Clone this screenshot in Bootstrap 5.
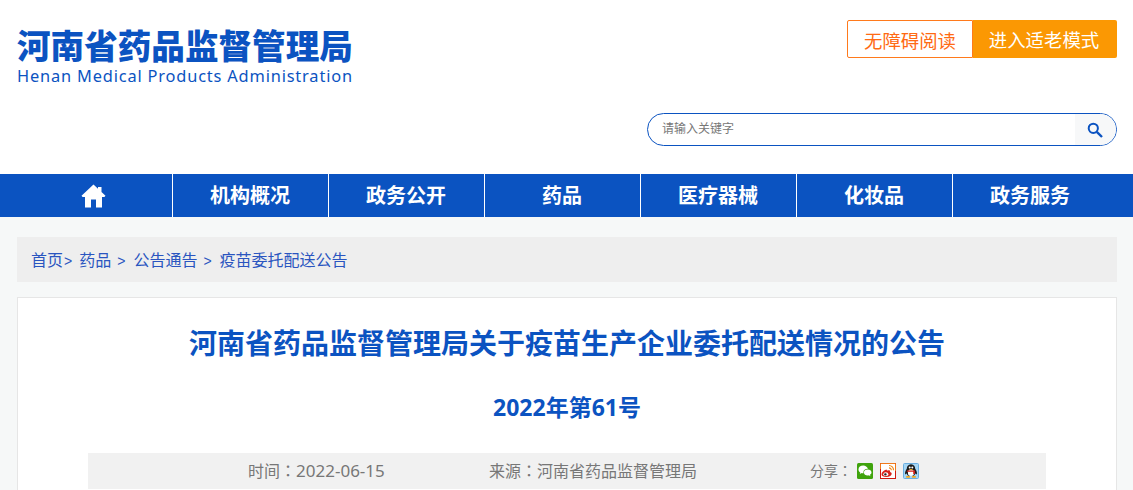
<!DOCTYPE html>
<html lang="zh-CN">

<head>
  <meta charset="UTF-8">
  <meta name="viewport" content="width=device-width, initial-scale=1.0">
  <title>河南省药品监督管理局</title>
  <link href="https://cdn.jsdelivr.net/npm/bootstrap@5.3.3/dist/css/bootstrap.min.css" rel="stylesheet">
  <script src="https://cdn.jsdelivr.net/npm/bootstrap@5.3.3/dist/js/bootstrap.bundle.min.js"></script>
  <style>
    body { background: #f6f8f8; font-family: "Liberation Sans", "Noto Sans CJK SC", sans-serif; overflow: hidden; }
    .wrap { width: 1100px; margin-left: 17px; }
    .site-head { background: #fff; height: 174px; }
    .logo-box { padding-top: 29px; color: #0b53c1; }
    .logo-cn { font-size: 33.6px; line-height: 38px; font-weight: 900; white-space: nowrap; }
    .logo-en { font-family: "Noto Sans", sans-serif; font-size: 16.4px; line-height: 17px; letter-spacing: .82px; white-space: nowrap; }
    .head-right { padding-top: 20px; width: 470px; }
    .mode-a, .mode-b { height: 38px; font-size: 18.4px; text-align: center; white-space: nowrap; }
    .mode-a { width: 126px; color: #ff6a13; border: 1px solid #ff7a1c; border-radius: 2px 0 0 2px; line-height: 41px; }
    .mode-b { width: 144px; padding-right: 2px; color: #fff; background: #fb9803; border-radius: 0 2px 2px 0; line-height: 42px; }
    .search-box { margin-top: 55px; height: 33px; border: 1px solid #0b53c1; border-radius: 17px; overflow: hidden; }
    .search-txt { padding-left: 14px; font-size: 12px; line-height: 31px; color: #777; }
    .search-btn { width: 41px; padding-right: 2px; background: #f7f8f9; }
    .main-nav { background: #0b53c1; height: 43px; }
    .nav-cell { width: 156px; height: 43px; padding-right: 1px; line-height: 45px; text-align: center; color: #fff; font-size: 20px; font-weight: 700; border-left: 1px solid #fff; }
    .nav-cell:first-child { width: 155px; padding-right: 2px; border-left: 0; }
    .crumb-bar { margin-top: 20px; height: 45px; background: #eee; padding-left: 14px; font-size: 16px; line-height: 47px; color: #2a55c0; white-space: nowrap; }
    .crumb-sep { font-size: 14px; }
    .crumb-sep-first { margin: 0 7px 0 1px; }
    .crumb-sep-mid { margin: 0 8px 0 6px; }
    .art-box { margin-top: 15px; height: 300px; background: #fff; border: 1px solid #e6e6e6; padding: 0 70px; }
    .art-title { margin: 0; padding-top: 28px; font-size: 28px; line-height: 38px; font-weight: 700; color: #0b53c1; text-align: center; }
    .art-no { margin: 0; padding-top: 24px; font-family: "Noto Sans", "Noto Sans CJK SC", sans-serif; font-size: 23px; line-height: 38px; font-weight: 700; color: #0b53c1; text-align: center; }
    .art-meta { margin-top: 27px; height: 36px; background: #f1f1f1; color: #777; font-size: 16px; line-height: 35px; }
    .meta-time { margin-left: 160px; width: 241px; }
    .meta-date { font-family: "Noto Sans", sans-serif; font-size: 17px; }
    .meta-colon { font-family: "Noto Sans CJK TC", sans-serif; }
    .meta-src { width: 321px; }
    .meta-share { font-size: 14px; }
    .share-label { width: 40px; margin-right: 7px; white-space: nowrap; }
    .share-icon { width: 16px; height: 16px; margin-right: 7px; }
  </style>
</head>

<body>
  <div class="site-head">
    <div class="wrap d-flex justify-content-between">
      <div class="logo-box">
        <div class="logo-cn">河南省药品监督管理局</div>
        <div class="logo-en">Henan Medical Products Administration</div>
      </div>
      <div class="head-right">
        <div class="d-flex justify-content-end">
          <div class="mode-a">无障碍阅读</div>
          <div class="mode-b">进入适老模式</div>
        </div>
        <div class="search-box d-flex justify-content-between">
          <div class="search-txt">请输入关键字</div>
          <div class="search-btn d-flex align-items-center justify-content-center">
            <svg width="16" height="16" viewBox="0 0 16 16" fill="none" stroke="#0b53c1">
              <circle cx="6.3" cy="6.3" r="4.6" stroke-width="2"/>
              <path d="M9.8 9.8 15 15" stroke-width="2.4"/>
            </svg>
          </div>
        </div>
      </div>
    </div>
  </div>

  <div class="main-nav">
    <div class="wrap d-flex">
      <div class="nav-cell d-flex align-items-center justify-content-center">
        <svg width="25" height="24" viewBox="0 0 25 24" fill="#fff">
          <path d="M12.5 .5 .5 11.8 1.600 13H4V23.500H10V15.500H15V23.500H21V13H23.400L24.500 11.800 20.500 8V3H17V4.800Z"/>
        </svg>
      </div>
      <div class="nav-cell">机构概况</div>
      <div class="nav-cell">政务公开</div>
      <div class="nav-cell">药品</div>
      <div class="nav-cell">医疗器械</div>
      <div class="nav-cell">化妆品</div>
      <div class="nav-cell">政务服务</div>
    </div>
  </div>

  <div class="wrap">
    <div class="crumb-bar">首页<span class="crumb-sep crumb-sep-first">&gt;</span>药品<span class="crumb-sep crumb-sep-mid">&gt;</span>公告通告<span class="crumb-sep crumb-sep-mid">&gt;</span>疫苗委托配送公告</div>
    <div class="art-box">
      <h1 class="art-title">河南省药品监督管理局关于疫苗生产企业委托配送情况的公告</h1>
      <h2 class="art-no">2022年第61号</h2>
      <div class="art-meta d-flex">
        <div class="meta-time">时间<span class="meta-colon" lang="zh-TW">：</span><span class="meta-date">2022-06-15</span></div>
        <div class="meta-src">来源<span class="meta-colon" lang="zh-TW">：</span>河南省药品监督管理局</div>
        <div class="meta-share d-flex align-items-center">
          <span class="share-label">分享<span class="meta-colon" lang="zh-TW">：</span></span>
          <svg class="share-icon" viewBox="0 0 16 16">
            <rect width="16" height="16" rx="1.500" fill="#3fa30c"/>
            <path d="M6.300 2.500C3.500 2.500 1.500 4.200 1.500 6.400c0 1.300.7 2.300 1.800 3L2.800 11l2-1c.5.100 1 .2 1.500.2h.3c-.1-.3-.2-.7-.2-1 0-2 1.900-3.500 4.200-3.500h.4C10.200 3.800 8.400 2.500 6.300 2.500Z" fill="#fff"/>
            <path d="M10.700 6.500C8.500 6.500 6.900 7.800 6.900 9.500s1.600 3 3.800 3c.4 0 .8-.1 1.200-.2l1.500.9-.4-1.400c.9-.6 1.500-1.400 1.500-2.300 0-1.700-1.600-3-3.800-3Z" fill="#fff"/>
          </svg>
          <svg class="share-icon" viewBox="0 0 16 16">
            <rect x=".5" y=".5" width="15" height="15" fill="#fff" stroke="#d0190f"/>
            <path d="M.5 6V.5H15.500V8" fill="none" stroke="#f07a1d"/>
            <path d="M6.500 6.500C3.800 7.300 1.500 9.300 1.500 11.200c0 1.700 2 2.800 4.800 2.800 3.200 0 5.400-1.600 5.400-3.200 0-1-1-1.500-1.700-1.700.3-.9.200-1.600-.8-1.900-.8-.2-1.700.1-2.300.4.100-.5 0-1-.4-.6Z" fill="#d8221a"/>
            <ellipse cx="5.800" cy="11.200" rx="2.500" ry="1.900" fill="#fff"/>
            <ellipse cx="5.400" cy="11.400" rx="1.300" ry="1.100" fill="#222"/>
            <path d="M9 2.500a4.500 4.500 0 0 1 4.500 4.800M9 4.800a2.300 2.300 0 0 1 2.300 2.500" fill="none" stroke="#f08a1d" stroke-width="1.200"/>
          </svg>
          <svg class="share-icon" viewBox="0 0 16 16">
            <rect x=".5" y=".5" width="15" height="15" rx="1" fill="#a5d6f5" stroke="#6aaee0"/>
            <path d="M8 1.200c-2.900 0-4.200 2.200-4.200 4.500-1.100 1.600-2.200 3.800-1.600 5.500.5.300 1.200-.4 1.500-.9.200 1 .9 2 1.500 2.500h5.600c.6-.5 1.300-1.500 1.500-2.500.3.500 1 1.200 1.500.9.600-1.700-.5-3.900-1.600-5.500 0-2.300-1.300-4.500-4.200-4.500Z" fill="#1a1a1a"/>
            <ellipse cx="8" cy="9.800" rx="3.100" ry="3.300" fill="#fff"/>
            <circle cx="6.700" cy="4.500" r="1" fill="#fff"/><circle cx="9.300" cy="4.500" r="1" fill="#fff"/>
            <path d="M5.800 5.900h4.400L8 7.200Z" fill="#f4a81c"/>
            <path d="M3.900 7.400h8.200v1.300H3.900ZM10.200 8.700h1.700v2.400h-1.700Z" fill="#d8221a"/>
            <path d="M3.200 13.100h3.700v1.600H3.200ZM9.100 13.100h3.700v1.600H9.100Z" fill="#f4a81c"/>
          </svg>
        </div>
      </div>
    </div>
  </div>
</body>

</html>
